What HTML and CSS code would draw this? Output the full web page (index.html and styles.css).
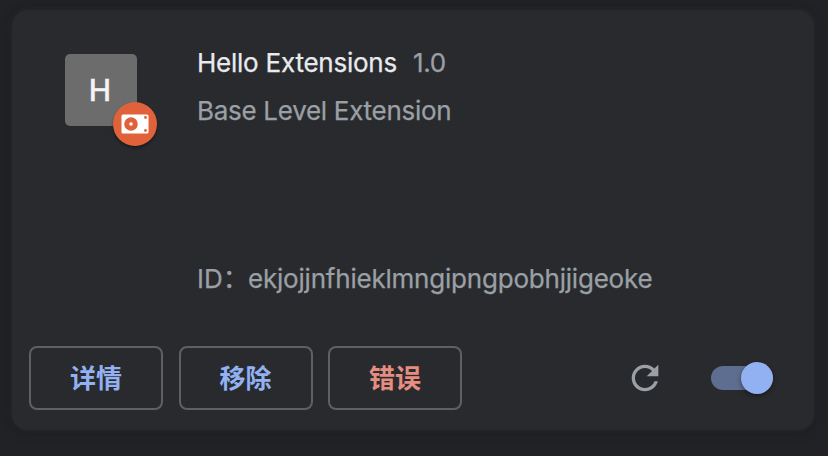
FILE: index.html
```html
<!DOCTYPE html>
<html lang="zh-CN">
<head>
<meta charset="utf-8">
<title>Hello Extensions</title>
<link rel="stylesheet" href="styles.css">
</head>
<body>
<article class="card">
  <div class="main">
    <div class="icon">
      <span class="letter">H</span>
      <span class="badge">
        <svg width="28" height="20" viewBox="0 0 28 20" aria-hidden="true">
          <rect x="0.5" y="0.5" width="27" height="19" rx="1.5" fill="#fff"/>
          <circle cx="10" cy="10" r="4.3" fill="none" stroke="#e0623a" stroke-width="5"/>
          <circle cx="24.5" cy="3.5" r="1.4" fill="#e0623a"/>
          <circle cx="24.5" cy="16.5" r="1.4" fill="#e0623a"/>
        </svg>
      </span>
    </div>
    <div class="content">
      <div class="heading"><span class="name">Hello Extensions</span><span class="version">1.0</span></div>
      <div class="description">Base Level Extension</div>
      <div class="id"><span class="id-label">ID：</span><span class="id-value">ekjojjnfhieklmngipngpobhjjigeoke</span></div>
    </div>
  </div>
  <div class="actions">
    <button class="button">详情</button>
    <button class="button">移除</button>
    <button class="button error">错误</button>
    <svg class="reload" width="40" height="40" viewBox="0 0 24 24" aria-hidden="true"><path fill="#9aa0a6" d="M17.65 6.35C16.2 4.9 14.21 4 12 4c-4.42 0-7.99 3.58-7.99 8s3.57 8 7.99 8c3.73 0 6.84-2.55 7.73-6h-2.08c-.82 2.33-3.04 4-5.65 4-3.31 0-6-2.69-6-6s2.69-6 6-6c1.66 0 3.14.69 4.22 1.78L13 11h7V4l-2.35 2.35z"/></svg>
    <div class="toggle"><span class="knob"></span></div>
  </div>
</article>
</body>
</html>
```
FILE: styles.css
```css
* { box-sizing: border-box; }
body {
  margin: 0;
  height: 456px;
  padding: 10px 14px 26px 12px;
  overflow: hidden;
  background: #212225;
  font: 26px/32px Inter, "Noto Sans CJK SC", sans-serif;
  color: #9aa0a6;
}
.card {
  height: 420px;
  display: flex;
  flex-direction: column;
  justify-content: space-between;
  padding: 37px 41px 20px 17px;
  border-radius: 16px;
  background: #292a2d;
  box-shadow: 0 0 4px 1px rgba(41, 42, 45, .6), 0 2px 12px 4px rgba(0, 0, 0, .06);
}
.main { display: flex; padding-left: 36px; }
.icon {
  position: relative;
  flex: none;
  display: flex;
  align-items: center;
  justify-content: center;
  width: 72px;
  height: 72px;
  margin: 7px 60px 0 0;
  border-radius: 5px;
  background: #6c6c6c;
}
.letter { font: 500 30px/36px Inter, sans-serif; color: #f4f4f4; margin-left: -2px; -webkit-text-stroke: .3px #f4f4f4; }
.badge {
  position: absolute;
  left: 48px;
  top: 48px;
  display: flex;
  align-items: center;
  justify-content: center;
  width: 44px;
  height: 44px;
  border-radius: 50%;
  background: #e0623a;
  box-shadow: 0 2px 3px rgba(0, 0, 0, .4);
}
.content { white-space: nowrap; -webkit-text-stroke: .25px currentColor; }
.heading { display: flex; gap: 16px; }
.name { color: #e8eaed; letter-spacing: -.24px; }
.version { letter-spacing: -.3px; }
.description { margin-top: 16px; letter-spacing: -.29px; }
.id { display: flex; margin-top: 136px; }
.id-label { width: 51px; }
.id-value { letter-spacing: -.21px; }
.actions { display: flex; align-items: center; }
.button {
  width: 134px;
  height: 64px;
  padding: 0 0 2px;
  margin-right: 15.5px;
  border: 2px solid #5f6063;
  border-radius: 8px;
  background: transparent;
  color: #92b1f2;
  font: 700 26px/32px "Noto Sans CJK SC", sans-serif;
}
.error { color: #e68d82; }
.reload { margin-left: auto; }
.toggle {
  position: relative;
  width: 62px;
  height: 24px;
  margin-left: 46px;
  border-radius: 12px;
  background: #5e6e90;
}
.knob {
  position: absolute;
  right: 0;
  top: -4px;
  width: 32px;
  height: 32px;
  border-radius: 50%;
  background: #92b1f2;
  box-shadow: 0 2px 5px rgba(0, 0, 0, .4);
}
```
